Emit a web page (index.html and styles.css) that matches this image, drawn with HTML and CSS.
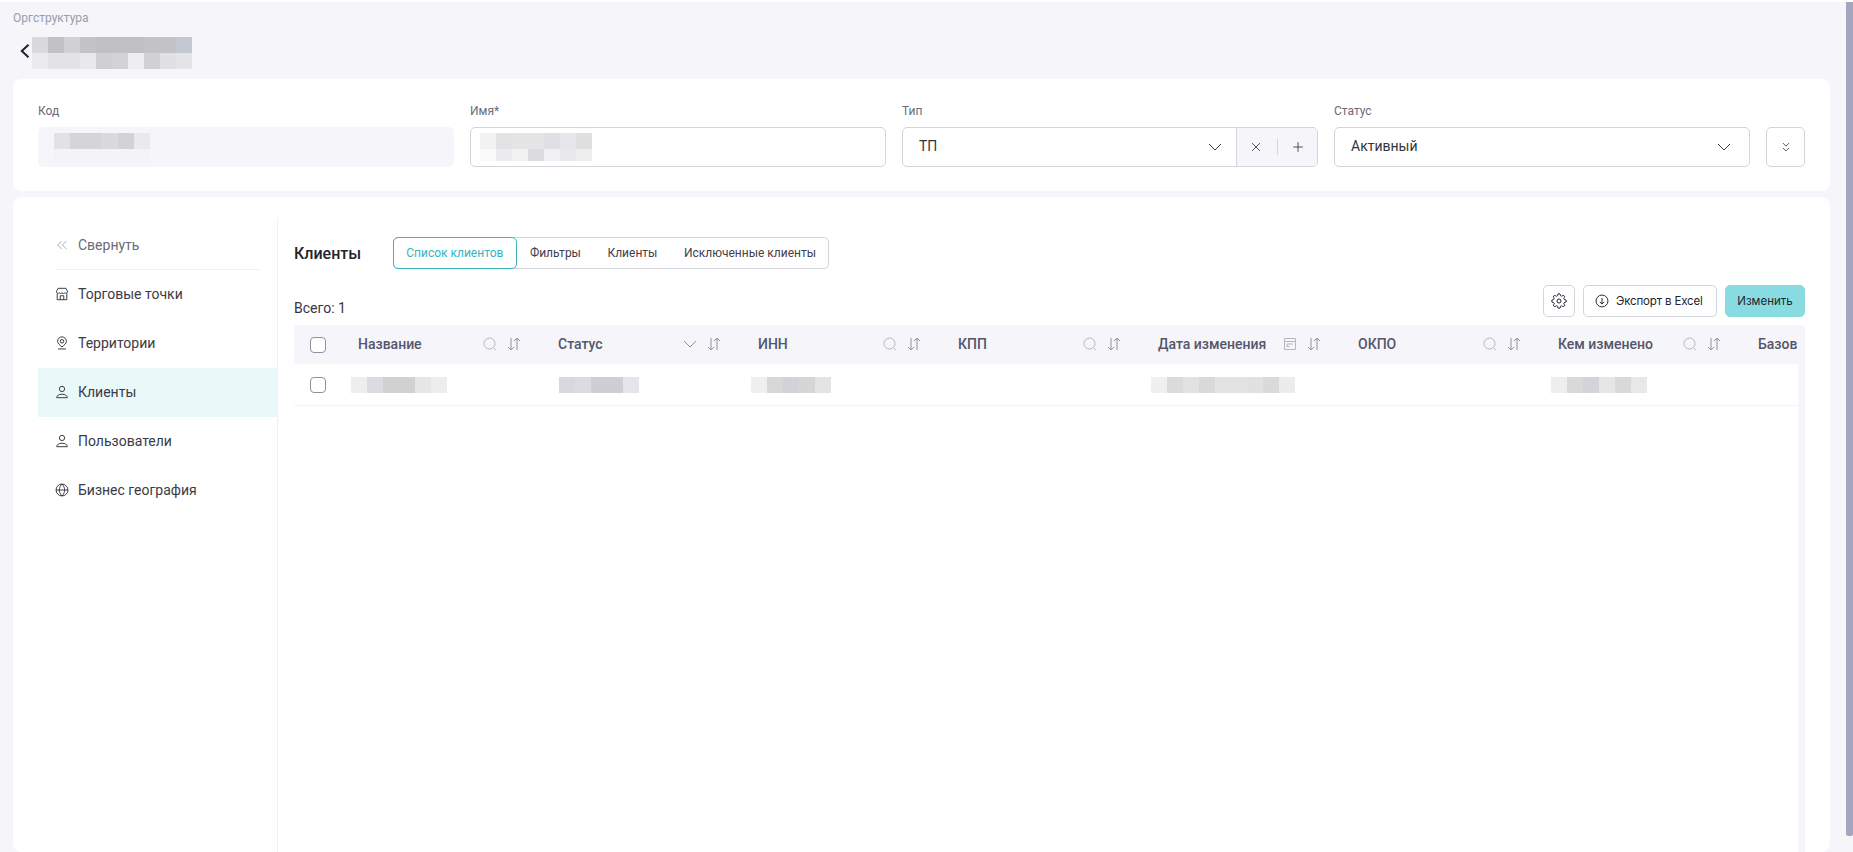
FILE: index.html
```html
<!doctype html>
<html lang="ru">

<head>
	<meta charset="UTF-8" />
	<meta name="viewport" content="width=device-width, initial-scale=1.0" />
	<title>Оргструктура</title>
	<link rel="stylesheet" href="styles.css">
</head>

<body>
	<svg class="sprite" xmlns="http://www.w3.org/2000/svg">
		<symbol id="i-down" viewBox="0 0 16 16"><path d="M2 5l6 6 6-6" /></symbol>
		<symbol id="i-double-down" viewBox="0 0 16 16"><path d="M4.500 3.500L8 7l3.500-3.500M4.500 9L8 12.500 11.500 9" /></symbol>
		<symbol id="i-double-left" viewBox="0 0 16 16"><path d="M7.500 3.500L3 8l4.500 4.500M13 3.500L8.500 8l4.500 4.500" /></symbol>
		<symbol id="i-close" viewBox="0 0 16 16"><path d="M3.500 3.500l9 9M12.500 3.500l-9 9" /></symbol>
		<symbol id="i-plus" viewBox="0 0 16 16"><path d="M8 2.500v11M2.500 8h11" /></symbol>
		<symbol id="i-search" viewBox="0 0 16 16"><circle cx="7.500" cy="7.500" r="5.500" /><path d="M11.500 11.500l2.500 2.500" /></symbol>
		<symbol id="i-sort" viewBox="0 0 16 16"><path d="M5 2v12M2 11l3 3 3-3M11 14V2M8 5l3-3 3 3" /></symbol>
		<symbol id="i-calendar" viewBox="0 0 16 16"><path d="M2.500 2.500h11v11h-11zM2.500 5.500h11M5 8h6M5 10.500h2.500M5 8v3" /></symbol>
		<symbol id="i-store" viewBox="0 0 16 16"><path d="M3.500 1.500h9l2 4a2 2 0 0 1-3.250 1.200 2.400 2.400 0 0 1-3.250 0 2.400 2.400 0 0 1-3.250 0A2 2 0 0 1 1.500 5.500zM2.500 7.500v7h11v-7M6 14.500V10h4v4.500" /></symbol>
		<symbol id="i-pin" viewBox="0 0 16 16"><path d="M8 12.500C5.500 10.500 3 8.500 3 6a5 5 0 0 1 10 0c0 2.500-2.500 4.500-5 6.500z" /><circle cx="8" cy="6" r="2" /><path d="M3.500 14.800h9" /></symbol>
		<symbol id="i-user" viewBox="0 0 16 16"><circle cx="8" cy="4.500" r="3" /><path d="M2 14.500c0-2.500 2.500-4 6-4s6 1.500 6 4z" /></symbol>
		<symbol id="i-globe" viewBox="0 0 16 16"><circle cx="8" cy="8" r="6.800" /><path d="M1.200 8h13.600M8 1.200c-4 4-4 9.600 0 13.600M8 1.200c4 4 4 9.600 0 13.600" /></symbol>
		<symbol id="i-export" viewBox="0 0 16 16"><circle cx="8" cy="8" r="6.800" /><path d="M8 4.500v7M5.500 9L8 11.500 10.500 9" /></symbol>
		<symbol id="i-gear" viewBox="0 0 24 24"><circle cx="12" cy="12" r="3" /><path d="M19.400 15a1.650 1.650 0 0 0 .33 1.820l.06.06a2 2 0 0 1 0 2.830 2 2 0 0 1-2.830 0l-.06-.06a1.650 1.650 0 0 0-1.820-.33 1.650 1.650 0 0 0-1 1.510V21a2 2 0 0 1-2 2 2 2 0 0 1-2-2v-.09A1.650 1.650 0 0 0 9 19.400a1.650 1.650 0 0 0-1.820.33l-.06.06a2 2 0 0 1-2.830 0 2 2 0 0 1 0-2.830l.06-.06a1.650 1.650 0 0 0 .33-1.820 1.650 1.650 0 0 0-1.510-1H3a2 2 0 0 1-2-2 2 2 0 0 1 2-2h.09A1.650 1.650 0 0 0 4.600 9a1.650 1.650 0 0 0-.33-1.820l-.06-.06a2 2 0 0 1 0-2.830 2 2 0 0 1 2.830 0l.06.06a1.650 1.650 0 0 0 1.820.33H9a1.650 1.650 0 0 0 1-1.510V3a2 2 0 0 1 2-2 2 2 0 0 1 2 2v.09a1.650 1.650 0 0 0 1 1.510 1.650 1.650 0 0 0 1.820-.33l.06-.06a2 2 0 0 1 2.830 0 2 2 0 0 1 0 2.830l-.06.06a1.650 1.650 0 0 0-.33 1.820V9a1.650 1.650 0 0 0 1.510 1H21a2 2 0 0 1 2 2 2 2 0 0 1-2 2h-.09a1.650 1.650 0 0 0-1.510 1z" /></symbol>
	</svg>

	<div class="page">
		<div class="breadcrumb">Оргструктура</div>
		<div class="title-row">
			<svg class="back-icon" viewBox="0 0 10 14"><path d="M8.500 .8L1.800 7l6.700 6.200" /></svg>
			<div class="mask mask-title"></div>
		</div>

		<section class="card form-card">
			<div class="field">
				<label class="field-label">Код</label>
				<div class="input input-readonly"><div class="mask mask-code"></div></div>
			</div>
			<div class="field">
				<label class="field-label">Имя*</label>
				<div class="input input-name"><div class="mask mask-name"></div></div>
			</div>
			<div class="field">
				<label class="field-label">Тип</label>
				<div class="input input-select">
					<span class="input-value">ТП</span>
					<svg class="icon select-arrow select-arrow-tight"><use href="#i-down" /></svg>
					<div class="input-actions">
						<svg class="icon icon-small"><use href="#i-close" /></svg>
						<span class="actions-divider"></span>
						<svg class="icon icon-small"><use href="#i-plus" /></svg>
					</div>
				</div>
			</div>
			<div class="field">
				<label class="field-label">Статус</label>
				<div class="input input-select">
					<span class="input-value">Активный</span>
					<svg class="icon select-arrow"><use href="#i-down" /></svg>
				</div>
			</div>
			<button class="expand-btn"><svg class="icon icon-small"><use href="#i-double-down" /></svg></button>
		</section>

		<section class="card main-card">
			<nav class="sidebar">
				<a class="side-item side-collapse"><svg class="icon"><use href="#i-double-left" /></svg>Свернуть</a>
				<a class="side-item"><svg class="icon"><use href="#i-store" /></svg>Торговые точки</a>
				<a class="side-item"><svg class="icon"><use href="#i-pin" /></svg>Территории</a>
				<a class="side-item active"><svg class="icon"><use href="#i-user" /></svg>Клиенты</a>
				<a class="side-item"><svg class="icon"><use href="#i-user" /></svg>Пользователи</a>
				<a class="side-item"><svg class="icon"><use href="#i-globe" /></svg>Бизнес география</a>
			</nav>

			<div class="content">
				<div class="content-head">
					<h2 class="content-title">Клиенты</h2>
					<div class="tabs">
						<button class="tab active">Список клиентов</button>
						<button class="tab">Фильтры</button>
						<button class="tab">Клиенты</button>
						<button class="tab">Исключенные клиенты</button>
					</div>
				</div>

				<div class="toolbar">
					<span class="total">Всего: 1</span>
					<div class="toolbar-actions">
						<button class="tool-btn tool-gear"><svg class="icon"><use href="#i-gear" /></svg></button>
						<button class="tool-btn tool-export"><svg class="icon"><use href="#i-export" /></svg>Экспорт в Excel</button>
						<button class="tool-btn tool-primary">Изменить</button>
					</div>
				</div>

				<div class="table">
					<div class="table-head">
						<div class="table-grid">
							<div class="cell-check"><span class="checkbox"></span></div>
							<div class="th"><span class="th-text">Название</span><svg class="icon th-icon"><use href="#i-search" /></svg><svg class="icon th-sort"><use href="#i-sort" /></svg></div>
							<div class="th"><span class="th-text">Статус</span><svg class="icon th-sort"><use href="#i-down" /></svg><svg class="icon th-sort"><use href="#i-sort" /></svg></div>
							<div class="th"><span class="th-text">ИНН</span><svg class="icon th-icon"><use href="#i-search" /></svg><svg class="icon th-sort"><use href="#i-sort" /></svg></div>
							<div class="th"><span class="th-text">КПП</span><svg class="icon th-icon"><use href="#i-search" /></svg><svg class="icon th-sort"><use href="#i-sort" /></svg></div>
							<div class="th"><span class="th-text">Дата изменения</span><svg class="icon th-icon"><use href="#i-calendar" /></svg><svg class="icon th-sort"><use href="#i-sort" /></svg></div>
							<div class="th"><span class="th-text">ОКПО</span><svg class="icon th-icon"><use href="#i-search" /></svg><svg class="icon th-sort"><use href="#i-sort" /></svg></div>
							<div class="th"><span class="th-text">Кем изменено</span><svg class="icon th-icon"><use href="#i-search" /></svg><svg class="icon th-sort"><use href="#i-sort" /></svg></div>
							<div class="th"><span class="th-text">Базов</span></div>
						</div>
					</div>
					<div class="table-body">
						<div class="table-rows">
							<div class="table-grid table-row">
								<div class="cell-check"><span class="checkbox"></span></div>
								<div class="td"><div class="mask mask-c1"></div></div>
								<div class="td"><div class="mask mask-c2"></div></div>
								<div class="td"><div class="mask mask-c3"></div></div>
								<div class="td"></div>
								<div class="td"><div class="mask mask-c5"></div></div>
								<div class="td"></div>
								<div class="td"><div class="mask mask-c7"></div></div>
								<div class="td"></div>
							</div>
						</div>
						<div class="table-track"></div>
					</div>
				</div>
			</div>
		</section>
	</div>

	<div class="page-scrollbar"></div>
</body>

</html>
```

FILE: styles.css
```css
* {
	margin: 0;
	padding: 0;
	box-sizing: border-box;
}

html,
body {
	height: 100%;
	overflow: hidden;
}

body {
	font-family: Roboto, "Liberation Sans", sans-serif;
	font-size: 14px;
	color: #33343f;
	background-color: #f5f5fa;
	border-top: 2px solid #fff;
}

.sprite {
	display: none;
}

.icon {
	width: 16px;
	height: 16px;
	flex: none;
	fill: none;
	stroke: currentColor;
	stroke-width: 1;
}

.icon-small {
	width: 14px;
	height: 14px;
}

.page {
	height: 100%;
	display: flex;
	flex-direction: column;
	padding: 0 23px 0 13px;
}

.page-scrollbar {
	position: absolute;
	top: 2px;
	right: 0;
	width: 7px;
	height: 834px;
	background-color: #a3a6bd;
	border-radius: 0 0 2px 2px;
}

.breadcrumb {
	font-size: 12px;
	line-height: 16px;
	margin-top: 8px;
	color: #9b9caa;
}

.title-row {
	display: flex;
	align-items: flex-start;
	height: 32px;
	margin: 11px 0 10px;
	padding-left: 7px;
}

.back-icon {
	width: 10px;
	height: 14px;
	margin-top: 7px;
	fill: none;
	stroke: #1f2130;
	stroke-width: 2;
}

.card {
	background-color: #fff;
	border-radius: 8px;
}

/* затертые блоки */
.mask {
	flex: none;
	background-repeat: no-repeat;
	background-size: 100% 16px;
	background-position: 0 0, 0 16px;
}

.mask-title {
	width: 160px;
	height: 32px;
	margin-left: 2px;
	background-image:
		linear-gradient(90deg, #d9d9de 10%, #c1c1c6 10% 20%, #d0d1d5 20% 30%, #c3c3c8 30% 40%, #bfbfc4 40% 70%, #c2c2c7 70% 90%, #c5c8d0 90%),
		linear-gradient(90deg, #eaeaef 10%, #e2e2e7 10% 30%, #e8e8ed 30% 40%, #cfcfd4 40% 50%, #d2d2d7 50% 60%, #ededf2 60% 70%, #d0d0d5 70% 80%, #e0e0e5 80% 90%, #e3e3e8 90%);
}

.mask-code {
	width: 96px;
	height: 32px;
	margin-top: 4px;
	background-image:
		linear-gradient(90deg, #e1e1e6 16.66%, #d4d4d9 16.66% 50%, #d9d9de 50% 66.66%, #d2d2d7 66.66% 83.33%, #e9e9ee 83.33%),
		linear-gradient(90deg, #f3f3f8, #f3f3f8);
}

.mask-name {
	width: 112px;
	height: 28px;
	background-image:
		linear-gradient(90deg, #f2f2f2 14.28%, #e3e3e5 14.28% 28.57%, #e3e5e7 28.57% 42.85%, #e5e5e7 42.85% 57.14%, #e0e0e4 57.14% 71.42%, #e6e7ea 71.42% 85.71%, #dedfe1 85.71%),
		linear-gradient(90deg, #fafafa 14.28%, #ececee 14.28% 28.57%, #f2f2f3 28.57% 42.85%, #dcdcde 42.85% 57.14%, #f0f1f5 57.14% 71.42%, #e9e9eb 71.42% 85.71%, #eeeeef 85.71%);
}

.mask-c1,
.mask-c2,
.mask-c3,
.mask-c5,
.mask-c7 {
	height: 16px;
	margin-left: -7px;
}

.mask-c1 {
	width: 96px;
	background-image: linear-gradient(90deg, #eeeef0 16.66%, #dcdce0 16.66% 33.33%, #d1d1d4 33.33% 66.66%, #e6e6e8 66.66% 83.33%, #ededef 83.33%);
}

.mask-c2 {
	width: 80px;
	margin-left: 1px;
	background-image: linear-gradient(90deg, #d9d9dd 20%, #dcdce0 20% 40%, #cfcfd3 40% 80%, #e6e6ea 80%);
}

.mask-c3 {
	width: 80px;
	background-image: linear-gradient(90deg, #efeff1 20%, #d8d8db 20% 40%, #d3d3d7 40% 60%, #d6d6d9 60% 80%, #e4e4e6 80%);
}

.mask-c5 {
	width: 144px;
	background-image: linear-gradient(90deg, #f0f0f2 11.11%, #dbdbdd 11.11% 22.22%, #e2e2e4 22.22% 33.33%, #d9d9db 33.33% 44.44%, #e3e3e5 44.44% 66.66%, #e1e1e3 66.66% 77.77%, #dadadc 77.77% 88.88%, #ececee 88.88%);
}

.mask-c7 {
	width: 96px;
	background-image: linear-gradient(90deg, #eeeef0 16.66%, #d9d9dc 16.66% 33.33%, #d4d4d8 33.33% 50%, #e6e6e9 50% 66.66%, #d9d9dc 66.66% 83.33%, #e8e8ea 83.33%);
}

.form-card {
	display: grid;
	grid-template-columns: repeat(4, 416px) 39px;
	column-gap: 16px;
	align-items: end;
	padding: 24px 25px 24px;
}

.field-label {
	display: block;
	font-size: 12px;
	line-height: 16px;
	margin-bottom: 8px;
	color: #6b6c78;
}

.input {
	display: flex;
	align-items: center;
	height: 40px;
	border: 1px solid #d3d4dc;
	border-radius: 5px;
}

.input-readonly {
	padding-left: 15px;
	background-color: #f5f5fa;
	border-color: #f5f5fa;
}

.input-name {
	padding-left: 9px;
}

.input-select {
	padding-left: 16px;
	overflow: hidden;
}

.input-value {
	flex: 1;
	padding-bottom: 2px;
	font-size: 14px;
}

.select-arrow {
	margin-right: 17px;
	color: #3a3b47;
}

.select-arrow-tight {
	margin-right: 13px;
}

.input-actions {
	display: flex;
	align-items: center;
	justify-content: space-between;
	width: 82px;
	height: 100%;
	padding: 0 13px 0 12px;
	margin-right: -1px;
	color: #3a3b47;
	background-color: #f5f5fa;
	border-left: 1px solid #d3d4dc;
}

.actions-divider {
	width: 1px;
	height: 16px;
	background-color: #d3d4dc;
}

.expand-btn {
	display: flex;
	align-items: center;
	justify-content: center;
	height: 40px;
	color: #3a3b47;
	background-color: #fff;
	border: 1px solid #d3d4dc;
	border-radius: 5px;
}

.main-card {
	flex: 1;
	display: flex;
	min-height: 0;
	margin-top: 6px;
	padding: 21px 25px 0;
}

.sidebar {
	flex: none;
	width: 240px;
	padding-top: 3px;
	border-right: 1px solid #f0f0f5;
}

.side-item {
	display: flex;
	align-items: center;
	gap: 9px;
	height: 49px;
	padding: 0 0 2px 17px;
	font-size: 14px;
	color: #3a3b47;
}

.side-item .icon {
	width: 14px;
	height: 14px;
	color: #23242e;
}

.side-item.active {
	background-color: #e9f8f8;
}

.side-collapse {
	position: relative;
	color: #6b6c78;
}

.side-collapse::after {
	content: "";
	position: absolute;
	left: 18px;
	right: 17px;
	bottom: 0;
	height: 1px;
	background-color: #f0f0f5;
}

.side-collapse .icon {
	color: #9b9caa;
}

.content {
	flex: 1;
	min-width: 0;
	display: flex;
	flex-direction: column;
	padding: 19px 0 0 16px;
}

.content-head {
	display: flex;
	align-items: center;
	height: 32px;
}

.content-title {
	width: 99px;
	font-size: 16px;
	font-weight: 500;
	color: #23242e;
}

.tabs {
	display: flex;
	height: 32px;
	border: 1px solid #d3d4dc;
	border-radius: 5px;
}

.tab {
	padding: 0 12.25px;
	margin: -1px 0;
	font-family: inherit;
	font-size: 12px;
	color: #3f404c;
	background: none;
	border: 1px solid transparent;
	border-radius: 5px;
}

.tab:last-child {
	margin-right: -1px;
}

.tab.active {
	margin-left: -1px;
	color: #33b5bd;
	border-color: #3cb5bd;
}

.toolbar {
	display: flex;
	align-items: flex-end;
	justify-content: space-between;
	margin: 16px 0 8px;
}

.total {
	font-size: 14px;
	line-height: 16px;
	margin-bottom: 1px;
}

.toolbar-actions {
	display: flex;
	gap: 8px;
}

.tool-btn {
	display: flex;
	align-items: center;
	justify-content: center;
	gap: 7px;
	height: 32px;
	font-family: Inter, Roboto, sans-serif;
	font-size: 11.5px;
	color: #23242e;
	background-color: #fff;
	border: 1px solid #d3d4dc;
	border-radius: 5px;
}

.tool-gear {
	width: 32px;
}

.tool-gear .icon {
	stroke-width: 1.5;
}

.tool-export {
	width: 134px;
	justify-content: flex-start;
	padding-left: 11px;
	letter-spacing: -0.15px;
}

.tool-export .icon {
	width: 14px;
	height: 14px;
	stroke-width: 1.1;
}

.tool-primary {
	width: 80px;
	background-color: #88dce1;
	border-color: #88dce1;
}

.table {
	flex: 1;
	min-height: 0;
	display: flex;
	flex-direction: column;
}

.table-head {
	flex: none;
	height: 39px;
	padding-right: 8px;
	background-color: #f5f5fa;
	border-radius: 4px 4px 0 0;
}

.table-head .table-grid {
	height: 100%;
	overflow: hidden;
}

.table-grid {
	display: grid;
	grid-template-columns: 48px repeat(8, 200px);
	align-items: center;
}

.cell-check {
	display: flex;
	justify-content: center;
}

.checkbox {
	display: block;
	width: 16px;
	height: 16px;
	background-color: #fff;
	border: 1px solid #8f909c;
	border-radius: 4px;
}

.th {
	display: flex;
	align-items: center;
	gap: 8px;
	padding: 0 20px 2px 16px;
	font-weight: 500;
	white-space: nowrap;
	color: #54566a;
}

.th-text {
	flex: 1;
}

.th-icon {
	color: #b5b7c2;
}

.th-sort {
	color: #8f919e;
}

.table-body {
	flex: 1;
	min-height: 0;
	display: flex;
}

.table-rows {
	flex: 1;
	min-width: 0;
	overflow: hidden;
}

.table-row {
	height: 42px;
	border-bottom: 1px solid #f2f2f6;
}

.td {
	display: flex;
	padding-left: 16px;
}

.table-track {
	flex: none;
	width: 7px;
	background-color: #f5f5fa;
}
```
